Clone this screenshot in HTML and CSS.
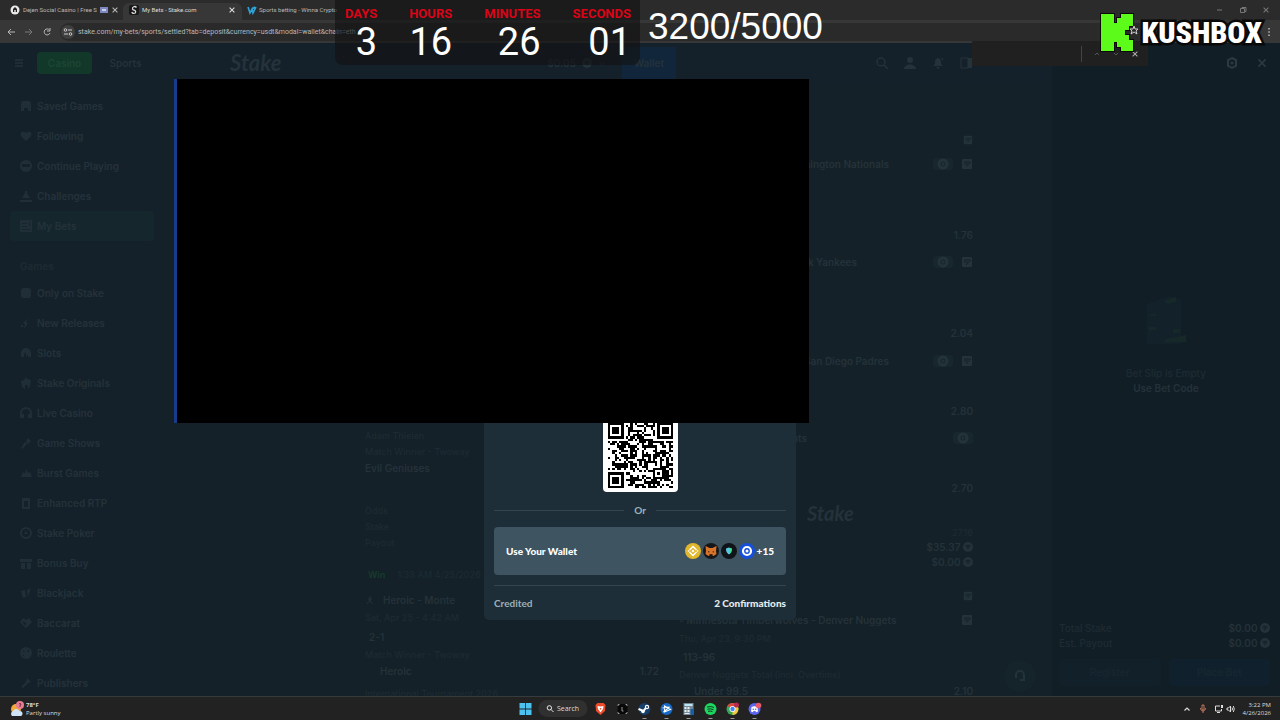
FILE: index.html
```html
<!DOCTYPE html>
<html lang="en">
<head>
<meta charset="utf-8">
<title>My Bets - Stake.com</title>
<link rel="stylesheet" href="styles.css">
</head>
<body>
<svg class="defs" aria-hidden="true">
  <symbol id="x" viewBox="0 0 10 10"><path d="M2 2l6 6M8 2l-6 6" fill="none" stroke="currentColor" stroke-width="1.3"/></symbol>
  <symbol id="coin" viewBox="0 0 12 12"><circle cx="6" cy="6" r="6" fill="currentColor"/><path d="M3 4h6M6 4v5M3 6h6" stroke="#142128"/></symbol>
  <symbol id="play" viewBox="0 0 20 12"><rect width="20" height="12" rx="3" fill="#18262e"/><circle cx="10" cy="6" r="4" fill="none" stroke="currentColor" stroke-width="3"/><path d="M9 4l3 2-3 2z" fill="currentColor"/></symbol>
  <symbol id="slip" viewBox="0 0 12 12"><rect x="1" y="1" width="10" height="10" rx="1" fill="currentColor"/><path d="M3 4h6M3 6h4M5 9l5-5" stroke="#142128"/></symbol>
</svg>

<header class="browser">
  <nav class="tabs">
    <button class="tab first"><svg class="i10" viewBox="0 0 10 10"><circle cx="5" cy="5" r="4.5" fill="#e8e8e8"/><path d="M3 7V4l2-2 2 2v3H5.700V5H4.300v2z" fill="#222"/></svg><span>Dejen Social Casino | Free S</span><svg class="i8" viewBox="0 0 8 8"><rect y="1" width="8" height="6" fill="#7d86bd"/><path d="M2 3h4v2H2z" fill="#c8cdf0"/></svg><svg class="i8"><use href="#x"/></svg></button>
    <button class="tab active"><svg class="i10" viewBox="0 0 10 10"><rect width="10" height="10" rx="2" fill="#181818"/><path d="M7.500 2.500C6 .5 3 2 3.500 4c.5 1.500 3.500 1 3.200 3C6.400 8.800 3.500 9 2.800 7" fill="none" stroke="#ddd" stroke-width="1.300"/></svg><span>My Bets - Stake.com</span><svg class="i8"><use href="#x"/></svg></button>
    <button class="tab third"><svg class="i8" viewBox="0 0 8 8"><path d="M0 1l2 6 2-4 1 4 3-6M4 3l3-2" fill="none" stroke="#2fa4d8" stroke-width="1.600"/></svg><span>Sports betting - Winna Crypto</span></button>
    <div class="wincontrols">
      <button aria-label="Minimize"><svg class="i8" viewBox="0 0 8 8"><path d="M1 4h5" stroke="currentColor"/></svg></button>
      <button aria-label="Restore"><svg class="i8" viewBox="0 0 8 8"><path d="M1.500 2.500h4v4h-4zM3 2.500v-1h4v4H5.500" fill="none" stroke="currentColor"/></svg></button>
      <button aria-label="Close"><svg class="i8"><use href="#x"/></svg></button>
    </div>
  </nav>
  <div class="toolbar">
    <button aria-label="Back"><svg class="i10" viewBox="0 0 10 10"><path d="M9 5H2M5 2L2 5l3 3" fill="none" stroke="currentColor"/></svg></button>
    <button aria-label="Forward" class="faded"><svg class="i10" viewBox="0 0 10 10"><path d="M1 5h7M5 2l3 3-3 3" fill="none" stroke="currentColor"/></svg></button>
    <button aria-label="Reload"><svg class="i10" viewBox="0 0 10 10"><path d="M7.500 3A3 3 0 1 0 8 6M8 1v3H5" fill="none" stroke="currentColor"/></svg></button>
    <label class="address"><svg class="site" viewBox="0 0 14 14"><circle cx="7" cy="7" r="7" fill="#404040"/><path d="M7 5h4M3 9h4" stroke="#ccc"/><circle cx="4.500" cy="5" r="1.300" fill="none" stroke="#ccc"/><circle cx="9.500" cy="9" r="1.300" fill="none" stroke="#ccc"/></svg><input type="text" aria-label="Address" value="stake.com/my-bets/sports/settled?tab=deposit&amp;currency=usdt&amp;modal=wallet&amp;chain=eth"></label>
    <button aria-label="Menu"><svg class="i8" viewBox="0 0 8 8"><path d="M4 0v1.500M4 3.200v1.500M4 6.500V8" stroke="currentColor" stroke-width="1.500"/></svg></button>
  </div>
</header>

<div class="app">
  <div class="left">
    <div class="lefthead"><button aria-label="Toggle menu"><svg class="i10" viewBox="0 0 10 10"><path d="M1 2h8M1 5h8M1 8h8" stroke="currentColor" stroke-width="1.500"/></svg></button><a class="casino" href="#">Casino</a><a class="sports" href="#">Sports</a></div>
    <nav class="side">
      <a href="#"><svg viewBox="0 0 12 12"><path d="M2 1h8l1 3v7H8V8H4v3H1V4z"/></svg>Saved Games</a>
      <a href="#"><svg viewBox="0 0 12 12"><path d="M6 11L1 6C-1 3 3 0 6 3c3-3 7 0 5 3z"/></svg>Following</a>
      <a href="#"><svg viewBox="0 0 12 12"><path fill-rule="evenodd" d="M6 0a6 6 0 1 1 0 12A6 6 0 0 1 6 0zM2 4v3h8V4z"/></svg>Continue Playing</a>
      <a href="#"><svg viewBox="0 0 12 12"><path d="M5 1h2v2l3 5H2l3-5zM0 10h12v2H0z"/></svg>Challenges</a>
      <a href="#" class="on"><svg viewBox="0 0 12 12"><path fill-rule="evenodd" d="M0 0h12v12H0zM2 3v1h5V3zM2 6v1h5V6zM2 9v1h8V9zM9 2v4h1V2z"/></svg>My Bets</a>
      <h2>Games</h2>
      <a href="#"><svg viewBox="0 0 12 12"><rect x="1" y="1" width="10" height="10" rx="3"/></svg>Only on Stake</a>
      <a href="#"><svg viewBox="0 0 12 12"><path d="M8 1L6 5l2 1-4 6 1-5-2-1zM1 8h2v2H1z"/></svg>New Releases</a>
      <a href="#"><svg viewBox="0 0 12 12"><path d="M1 10V6a5 5 0 0 1 10 0v4H8V7l-2 3V5L4 7v3z"/></svg>Slots</a>
      <a href="#"><svg viewBox="0 0 12 12"><path d="M6 0l1 2 4 1-1 6-2 3V8H5v4L2 10 1 4l3-1z"/></svg>Stake Originals</a>
      <a href="#"><svg viewBox="0 0 12 12"><path d="M0 11V6a6 6 0 0 1 12 0v5H8V7h2V6a4 4 0 0 0-8 0v1h2v4z"/></svg>Live Casino</a>
      <a href="#"><svg viewBox="0 0 12 12"><path d="M8 1l3 3-3 3-2-2zM5 5l2 2-5 5-1-1z"/></svg>Game Shows</a>
      <a href="#"><svg viewBox="0 0 12 12"><path d="M1 10l2-5 2 2 1-5 2 4 2-1 2 5z"/></svg>Burst Games</a>
      <a href="#"><svg viewBox="0 0 12 12"><path fill-rule="evenodd" d="M2 1h8v11H2zM4 4v6h4V4z"/></svg>Enhanced RTP</a>
      <a href="#"><svg viewBox="0 0 12 12"><path fill-rule="evenodd" d="M6 0a6 6 0 1 1 0 12A6 6 0 0 1 6 0zM6 2a4 4 0 1 0 0 8 4 4 0 0 0 0-8zM6 4l2 3H4z"/></svg>Stake Poker</a>
      <a href="#"><svg viewBox="0 0 12 12"><path d="M0 2h12v3H0zM1 6h4v6H1zM7 6h4v6H7z"/></svg>Bonus Buy</a>
      <a href="#"><svg viewBox="0 0 12 12"><path d="M1 4l4-1 1 7-3 1zM7 3l4-2-3 9z"/></svg>Blackjack</a>
      <a href="#"><svg viewBox="0 0 12 12"><path fill-rule="evenodd" d="M6 11L0 5l3-4 3 2 3-2 3 4zM3 4v2l3 3V6z"/></svg>Baccarat</a>
      <a href="#"><svg viewBox="0 0 12 12"><path fill-rule="evenodd" d="M6 0a6 6 0 1 1 0 12A6 6 0 0 1 6 0zM3 3v2h2zM7 3l2 3V3zM3 7v2l2 1z"/></svg>Roulette</a>
      <a href="#"><svg viewBox="0 0 12 12"><path d="M7 1l4 4-3 1-5 5-2-1 5-5z"/></svg>Publishers</a>
    </nav>
  </div>

  <div class="center">
    <div class="mainhead">
      <a class="brand" href="#">Stake</a>
      <div class="balance"><span>$0.05</span><svg class="i10"><use href="#coin"/></svg><svg class="i8" viewBox="0 0 8 8"><path d="M1 3l3 3 3-3" fill="none" stroke="currentColor"/></svg></div>
      <button class="wallet">Wallet</button>
      <div class="tools">
        <svg viewBox="0 0 12 12"><circle cx="5" cy="5" r="4" fill="none" stroke="currentColor" stroke-width="1.500"/><path d="M8 8l4 4" stroke="currentColor" stroke-width="1.500"/></svg>
        <svg viewBox="0 0 12 12"><circle cx="6" cy="3" r="3" fill="currentColor"/><path d="M0 12c0-6 12-6 12 0z" fill="currentColor"/></svg>
        <svg viewBox="0 0 12 12"><path d="M1 9l2-2V4c1-4 5-4 6 0v3l2 2zM4 10h4l-2 2zM9 1h2v3z" fill="currentColor"/></svg>
        <svg viewBox="0 0 12 12"><path d="M1 1h7v10H1z" fill="none" stroke="currentColor"/><path d="M8 1h4v10H8z" fill="currentColor"/></svg>
      </div>
    </div>
    <main class="bets">
      <section class="col one">
        <p class="dim">Adam Thielen</p><p class="dim">Match Winner - Twoway</p><p>Evil Geniuses</p>
        <p class="dim g27">Odds</p><p class="dim">Stake</p><p class="dim">Payout</p>
        <p class="dim g16"><b class="win">Win</b>1:38 AM 4/25/2026</p>
        <p class="g9 big"><svg class="i10" viewBox="0 0 10 10"><path d="M5 1v4L2 9M5 5l2 4M3 4h4" fill="none" stroke="currentColor"/></svg>Heroic - Monte</p>
        <p class="dim g2">Sat, Apr 25 - 4:42 AM</p>
        <p class="g3 ind">2-1</p><p class="dim g2">Match Winner - Twoway</p>
        <p class="split"><span class="chk">Heroic</span><span>1.72</span></p>
        <p class="dim g7">International Tournament 2026</p>
      </section>
      <section class="col two">
        <p class="icons"><svg class="i10"><use href="#slip"/></svg></p>
        <p class="split g8"><span class="cut">Washington Nationals</span><span class="icons"><svg class="pl"><use href="#play"/></svg><svg class="i12"><use href="#slip"/></svg></span></p>
        <p class="end g55">1.76</p>
        <p class="split g11"><span class="cut y">New York Yankees</span><span class="icons"><svg class="pl"><use href="#play"/></svg><svg class="i12"><use href="#slip"/></svg></span></p>
        <p class="end g55">2.04</p>
        <p class="split g12"><span class="cut">San Diego Padres</span><span class="icons"><svg class="pl"><use href="#play"/></svg><svg class="i12"><use href="#slip"/></svg></span></p>
        <p class="end g34">2.80</p>
        <p class="split g11"><span class="cut t">Giants</span><span class="icons"><svg class="pl"><use href="#play"/></svg></span></p>
        <p class="end g34">2.70</p>
        <p class="mark">Stake</p>
        <p class="end dim tight">27.16</p><p class="end tight">$35.37 <svg class="i10"><use href="#coin"/></svg></p><p class="end tight">$0.00 <svg class="i10"><use href="#coin"/></svg></p>
        <p class="icons g18"><svg class="i10"><use href="#slip"/></svg></p>
        <p class="split g8"><span>◦ Minnesota Timberwolves - Denver Nuggets</span><svg class="i12"><use href="#slip"/></svg></p>
        <p class="dim g3">Thu, Apr 23, 9:30 PM</p><p class="g2 ind">113-96</p><p class="dim g2">Denver Nuggets Total (incl. Overtime)</p>
        <p class="split"><span class="u">Under 99.5</span><span>2.10</span></p>
      </section>
    </main>
  </div>

  <aside class="betslip">
    <div class="sliphead"><svg viewBox="0 0 12 12"><path d="M6 1l4 2v6l-4 2-4-2V3z" fill="none" stroke="currentColor" stroke-width="2"/><circle cx="6" cy="6" r="1.500" fill="currentColor"/></svg><svg><use href="#x"/></svg></div>
    <div class="empty">
      <svg viewBox="0 0 44 52"><path d="M3 10L25 2l12 4v44H3z" fill="#13222a"/><path d="M5 21l7-2v3H5zM5 33h7v3H5zM20 7l12-4v5l-8 2zM29 35h7v4h-7zM22 45l20-4v7H20z" fill="#162928"/></svg>
      <p class="dim">Bet Slip is Empty</p><button>Use Bet Code</button>
    </div>
    <div class="totals">
      <p class="split"><span class="dim">Total Stake</span><span>$0.00 <svg class="i10"><use href="#coin"/></svg></span></p>
      <p class="split"><span class="dim">Est. Payout</span><span>$0.00 <svg class="i10"><use href="#coin"/></svg></span></p>
      <div class="slipbuttons"><button>Register</button><button class="blue">Place Bet</button></div>
    </div>
  </aside>
  <button class="help" aria-label="Support"><svg class="i12" viewBox="0 0 12 12"><path d="M2 8V5a4 4 0 0 1 8 0v5H6M2 5v3M10 5v3" fill="none" stroke="currentColor" stroke-width="2"/></svg></button>
</div>

<div class="modal" role="dialog" aria-label="Deposit">
  <div class="qrcard"><svg id="qr" viewBox="0 0 29 29" role="img" aria-label="Deposit QR code"></svg></div>
  <div class="or"><span>Or</span></div>
  <button class="usewallet"><b>Use Your Wallet</b>
    <span class="coins">
      <svg viewBox="0 0 16 16"><circle cx="8" cy="8" r="8" fill="#e3b72c"/><path d="M4.500 7L8 3.500 11.500 7M4.500 9L8 12.500 11.500 9" fill="none" stroke="#fff" stroke-width="1.500"/><path d="M8 6.500L9.500 8 8 9.500 6.500 8zM3.500 7l1 1-1 1-1-1zM12.500 7l1 1-1 1-1-1z" fill="#fff"/></svg>
      <svg viewBox="0 0 16 16"><circle cx="8" cy="8" r="8" fill="#171719"/><path d="M2.500 3L6.500 5h3l4-2-.5 5 .5 3-3 2-1.500-1h-2l-1.500 1-3-2 .5-3z" fill="#d9742b"/><path d="M5 8l2 1-2 .6zM11 8L9 9l2 .6zM6.500 11h3v1h-3z" fill="#442310"/></svg>
      <svg viewBox="0 0 16 16"><circle cx="8" cy="8" r="8" fill="#101318"/><path d="M8 4.500l3 1c0 3-.5 4.500-3 6z" fill="#39e38d"/><path d="M8 4.500l-3 1c0 3 .5 4.500 3 6z" fill="#59c7e4"/></svg>
      <svg viewBox="0 0 16 16"><circle cx="8" cy="8" r="8" fill="#164fdc"/><circle cx="8" cy="8" r="4" fill="none" stroke="#fff" stroke-width="2.200"/><circle cx="8" cy="8" r="1.500" fill="#fff"/></svg>
      <b>+15</b>
    </span>
  </button>
  <div class="credited"><span>Credited</span><b>2 Confirmations</b></div>
</div>

<form class="find"><input type="text" aria-label="Find in page"><span class="bar"></span><button type="button" aria-label="Previous"><svg class="i8" viewBox="0 0 8 8"><path d="M2 5l2-2 2 2" fill="none" stroke="currentColor"/></svg></button><button type="button" aria-label="Next"><svg class="i8" viewBox="0 0 8 8"><path d="M2 3l2 2 2-2" fill="none" stroke="currentColor"/></svg></button><button type="button" class="lit" aria-label="Close find"><svg class="i8"><use href="#x"/></svg></button></form>

<div class="blackout"></div>
<div class="timer"><div>DAYS<b>3</b></div><div>HOURS<b>16</b></div><div>MINUTES<b>26</b></div><div>SECONDS<b>01</b></div></div>
<div class="goal">3200/5000</div>
<div class="kush">
  <svg viewBox="0 0 36 42"><path d="M2 2h13v9h3V6h4V2h12v12h-4v4h-4v5h4v5h4v11H22v-4h-4v-5h-3v9H2z" fill="#5dfb19" stroke="#0a0a0a" stroke-width="2"/><path class="star" d="M35 14l1 3h3l-2 2 1 3-3-2-3 2 1-3-2-2h3z"/></svg>
  <span>KUSHBOX</span>
</div>

<footer class="taskbar">
  <div class="weather"><svg viewBox="0 0 14 16"><circle cx="6" cy="8" r="5" fill="#f2a93c"/><path d="M2 15a3 3 0 0 1 1-5c2-3 6-2 6 0 4-1 5 5 1 5z" fill="#cfe2f7"/><circle cx="10" cy="4" r="4" fill="#e77c93"/><path d="M9 3q1-1 2 0l-1 2v1" fill="none" stroke="#7c2b40"/></svg><span><b>78°F</b><br>Partly sunny</span></div>
  <div class="dock">
    <button aria-label="Start"><svg viewBox="0 0 12 12"><path d="M0 0h5.600v5.600H0zM6.400 0H12v5.600H6.400zM0 6.400h5.600V12H0zM6.400 6.400H12V12H6.400z" fill="#4cc2f1"/></svg></button>
    <button class="search"><svg viewBox="0 0 8 8"><circle cx="3.300" cy="3.300" r="2.500" fill="none" stroke="#fff"/><path d="M5 5l3 3" stroke="#fff"/></svg>Search</button>
    <button aria-label="Brave"><svg viewBox="0 0 12 12"><path d="M3 0h6l2 2-.5 6L6 12 1.500 8 1 2z" fill="#ee4b2b"/><path d="M3 3l3 .5L9 3 8.500 6 6 9.500 3.500 6z" fill="#fff"/><path d="M5 5h2L6 7z" fill="#ee4b2b"/></svg></button>
    <button aria-label="Capture"><svg viewBox="0 0 12 12"><path d="M1 1h10v10H1z" fill="#080808"/><path d="M1.500 3V1.500H3M9 1.500h1.500V3M10.500 9v1.500H9M3 10.500H1.500V9M5.500 4v4H7" fill="none" stroke="#999"/></svg></button>
    <button class="run" aria-label="Steam"><svg viewBox="0 0 12 12"><circle cx="6" cy="6" r="6" fill="#173f6b"/><path d="M0 6l5 2 3-4" fill="none" stroke="#fff" stroke-width="2"/><circle cx="8.500" cy="4" r="2.200" fill="#fff"/><circle cx="8.500" cy="4" r="1" fill="#173f6b"/><circle cx="4.500" cy="8.500" r="1.800" fill="#fff"/></svg></button>
    <button class="run" aria-label="Battle.net"><svg viewBox="0 0 12 12"><circle cx="6" cy="6" r="6" fill="#1669c7"/><path d="M4 3v6l6-2.500zM2 5l7-1M3 9l6-5" fill="none" stroke="#fff" stroke-width="1.100"/></svg></button>
    <button class="run" aria-label="Calculator"><svg viewBox="0 0 12 12"><path d="M1 0h10v12H1z" fill="#768a96"/><path d="M2 1h8v2H2z" fill="#bce7f5"/><path d="M2 4h2v2H2zM5 4h2v2H5zM2 7h2v2H2zM5 7h2v2H5zM2 10h5v1H2z" fill="#e5edf0"/><path d="M8 6h3v6H8z" fill="#175da6"/></svg></button>
    <button class="run" aria-label="Spotify"><svg viewBox="0 0 12 12"><circle cx="6" cy="6" r="6" fill="#1ed760"/><path d="M2.500 4q4-1.200 7 .5M3 6.200q3-1 6 .5M3.500 8.300q2.500-.7 4.500.4" fill="none" stroke="#12351f"/></svg></button>
    <button class="run" aria-label="Chrome"><svg viewBox="0 0 12 12"><circle cx="6" cy="6" r="6" fill="#35a853"/><path d="M6 6L.8 3A6 6 0 0 1 11.200 3z" fill="#df4639"/><path d="M6 6l5.200-3A6 6 0 0 1 6 12z" fill="#f9c53a"/><circle cx="6" cy="6" r="3" fill="#fff"/><circle cx="6" cy="6" r="2.200" fill="#4285f4"/><circle cx="10" cy="2" r="2.500" fill="#b62a50"/></svg></button>
    <button class="run" aria-label="Discord"><svg viewBox="0 0 12 12"><circle cx="6" cy="6" r="6" fill="#5c65ed"/><path d="M2.500 8.500L3 4q3-1.300 6 0l.5 4.500-2 .7L7 8H5l-.5 1.200z" fill="#fff"/><circle cx="4.800" cy="6.300" r=".8" fill="#5c65ed"/><circle cx="7.200" cy="6.300" r=".8" fill="#5c65ed"/><circle cx="10" cy="2.500" r="2.800" fill="#e65a6d"/></svg></button>
  </div>
  <div class="tray">
    <svg class="i8" viewBox="0 0 8 8"><path d="M1.500 5.500L4 3l2.500 2.500" fill="none" stroke="#ddd" stroke-width="1.200"/></svg>
    <svg class="i8 mic" viewBox="0 0 8 8"><path d="M3 0h2v5H3zM1.500 3c0 4 5 4 5 0M4 6v2" fill="none" stroke="#bd765c"/></svg>
    <svg class="i8" viewBox="0 0 8 8"><path d="M5 1H.5v5h6V4M2 7.500h3" fill="none" stroke="#ddd"/><path d="M6 0h2v3H6z" fill="#ddd"/></svg>
    <svg class="i8" viewBox="0 0 8 8"><path d="M0 3h1.500L3.500 1v6l-2-2H0zM5 2.500q1 1.500 0 3M6.300 1q2 3 0 6" fill="none" stroke="#ddd"/></svg>
    <time>3:22 PM<br>4/26/2026</time>
  </div>
</footer>
<script src="qr.js"></script>
</body>
</html>
```
FILE: styles.css
```css
* { box-sizing: border-box; }
body { margin: 0; height: 100vh; display: flex; flex-direction: column; position: relative; overflow: hidden; background: #142128; color: #24323a; font: 600 10px/16px Inter, "Open Sans", sans-serif; }
button, input { font: inherit; color: inherit; background: none; border: 0; padding: 0; margin: 0; }
button { display: flex; align-items: center; }
a { color: inherit; text-decoration: none; }
p, h2 { margin: 0; }
svg { flex: none; overflow: visible; }
.defs { position: absolute; width: 0; height: 0; }
.i8 { width: 8px; height: 8px; }
.i10 { width: 10px; height: 10px; }
.i12 { width: 12px; height: 12px; }

/* Browser window */
.browser { font: 7px/10px Roboto, "Open Sans", sans-serif; color: #b8b8b8; background: #2b2b2b; }
.tabs { height: 20px; display: flex; padding: 0 10px 0 6px; font-size: 6px; }
.tab { gap: 3px; padding: 0 4px; white-space: nowrap; }
.tab span { flex: 1; text-align: left; overflow: hidden; }
.tab.first { width: 117px; }
.tab.active { width: 119px; margin-top: 3px; padding: 0 6px 3px; border-radius: 6px 6px 0 0; background: #373737; color: #ddd; }
.tab.third { width: 104px; padding-left: 6px; }
.wincontrols { display: flex; gap: 15px; margin-left: auto; color: #777; }
.toolbar { height: 23px; display: flex; align-items: center; gap: 8px; padding: 0 7px 0 6px; background: #373737; }
.toolbar .faded { color: #777; }
.address { flex: 1; height: 18px; padding-left: 1px; display: flex; align-items: center; gap: 3px; border-radius: 9px; background: #2a2a2a; }
.address input { flex: 1; }
.site { width: 14px; height: 14px; }

/* Betting site */
.app { flex: 1; min-height: 0; display: flex; position: relative; overflow: hidden; }
.left { width: 162px; background: #14212a; }
.lefthead { height: 39px; display: flex; align-items: center; padding-left: 14px; font-size: 10px; background: #14202a; }
.casino, .sports { height: 22px; display: flex; align-items: center; justify-content: center; width: 55px; border-radius: 4px; }
.casino { margin-left: 13px; background: #113829; color: #1c4635; }
.sports { margin-left: 6px; }
.side { padding: 9px 8px 0 10px; }
.side a { height: 30px; display: flex; align-items: center; gap: 5px; padding-left: 10px; }
.side a svg { width: 12px; height: 12px; fill: #202f37; }
.side .on { background: #15262d; border-radius: 4px; }
.side h2 { padding: 13px 0 0 10px; font: inherit; line-height: 24px; color: #1d2b33; }
.center { flex: 1; min-width: 0; }
.mainhead { height: 39px; display: flex; align-items: center; padding: 0 80px 0 68px; background: #14202a; }
.brand, .mark { font: italic 700 22px/24px Lato, sans-serif; }
.balance { display: flex; align-items: center; gap: 6px; margin-left: auto; }
.wallet { height: 32px; padding: 0 12px; margin: 0 200px 0 16px; background: #11263a; }
.tools { display: flex; gap: 16px; }
.tools svg, .sliphead svg { width: 12px; height: 12px; }
.bets { display: grid; grid-template-columns: 1fr 1fr; gap: 20px; padding: 0 79px 0 203px; }
.col { min-width: 0; white-space: nowrap; }
.col p { min-height: 16px; }
.one { padding-top: 346px; }
.two { padding-top: 50px; }
.dim { color: #1d2b33; font-weight: 500; }
.one .dim, .two .dim { font-size: 9px; }
.split { display: flex; justify-content: space-between; align-items: center; }
.end { text-align: right; }
.icons { display: flex; justify-content: flex-end; align-items: center; gap: 8px; }
.pl { width: 20px; height: 12px; }
.end svg, .totals svg { vertical-align: -1px; }
.col .tight { min-height: 15px; line-height: 15px; }
.cut { width: 210px; text-align: right; }
.cut.y { width: 178px; }
.cut.t { width: 128px; }
.big { display: flex; align-items: center; gap: 8px; }
.win { color: #16392b; margin: 0 12px 0 3px; }
.ind { padding-left: 4px; }
.chk, .u { padding-left: 15px; }
.mark { padding: 5px 0 0 128px; font-size: 20px; }
.g2 { margin-top: 2px; }
.g3 { margin-top: 3px; }
.g7 { margin-top: 7px; }
.g8 { margin-top: 8px; }
.g9 { margin-top: 9px; }
.g11 { margin-top: 11px; }
.g12 { margin-top: 12px; }
.g16 { margin-top: 16px; }
.g18 { margin-top: 18px; }
.g27 { margin-top: 27px; }
.g34 { margin-top: 34px; }
.g55 { margin-top: 55px; }

.betslip { width: 228px; display: flex; flex-direction: column; background: #111e26; }
.sliphead { height: 39px; display: flex; justify-content: flex-end; align-items: center; gap: 18px; padding-right: 12px; color: #2b3941; }
.empty { display: flex; flex-direction: column; align-items: center; padding-top: 212px; line-height: 15px; }
.empty svg { width: 44px; height: 52px; margin-bottom: 20px; }
.totals { margin-top: auto; padding: 0 10px 10px 7px; line-height: 15px; }
.slipbuttons { display: flex; gap: 8px; margin-top: 8px; }
.slipbuttons button { flex: 1; height: 27px; justify-content: center; border-radius: 4px; background: #12202a; color: #172730; }
.slipbuttons .blue { background: #10212d; }
.help { position: absolute; right: 244px; bottom: 4px; width: 32px; height: 32px; justify-content: center; border-radius: 16px; background: #14242a; }

/* Deposit dialog */
.modal { position: absolute; left: 50%; bottom: 100px; transform: translateX(-50%); width: 312px; min-height: 520px; display: flex; flex-direction: column; justify-content: flex-end; padding: 0 10px 9px; border-radius: 5px; background: #1e2e38; color: #9db1b8; font: 700 10px/16px Lato, "Open Sans", sans-serif; }
.qrcard { align-self: center; padding: 6px 5px 4px; border-radius: 4px; background: #fff; }
#qr { display: block; width: 65px; height: 65px; shape-rendering: crispEdges; }
.or { display: flex; align-items: center; gap: 10px; margin: 10px 0 9px; }
.or::before, .or::after { content: ""; flex: 1; height: 1px; background: #334650; }
.usewallet { height: 48px; justify-content: space-between; padding: 0 12px; border-radius: 4px; background: #3e5561; color: #fff; }
.coins { display: flex; align-items: center; gap: 2px; }
.coins svg { width: 16px; height: 16px; }
.credited { display: flex; justify-content: space-between; margin-top: 10px; padding-top: 9px; border-top: 1px solid #334650; }
.credited b { color: #e4ebed; }

/* Find bar and stream overlays */
.find { position: absolute; right: 132px; top: 41px; width: 176px; height: 25px; display: flex; align-items: center; gap: 11px; padding-right: 9px; background: #202020; color: #555; }
.find input { flex: 1; min-width: 0; }
.bar { width: 1px; height: 16px; background: #444; }
.lit { color: #aaa; }
.blackout { position: absolute; left: 174px; top: 79px; width: 635px; height: 344px; border-left: 3px solid #183c8c; background: #000; }
.timer { position: absolute; left: 335px; top: 0; width: 305px; height: 65px; display: flex; justify-content: space-between; padding: 6px 9px 0 10px; border-radius: 0 0 8px 8px; background: rgb(18 18 20 / 65%); color: #d90416; font: 700 13px/16px Roboto, sans-serif; text-align: right; }
.timer b { display: block; color: #fff; font: 400 38px/40px Roboto, sans-serif; }
.goal { position: absolute; left: 648px; top: 6px; color: #fff; font: 37px/42px "Liberation Sans", Arial, sans-serif; }
.kush { position: absolute; right: 18px; top: 12px; display: flex; align-items: center; gap: 6px; color: #fff; font: 900 30px/42px "Roboto Condensed", "Open Sans Condensed", "DejaVu Sans Condensed", sans-serif; -webkit-text-stroke: 5px #090909; paint-order: stroke fill; }
.kush svg { width: 36px; height: 42px; }
.star { fill: none; stroke: #ccc; stroke-width: 1; }

/* Desktop taskbar */
.taskbar { height: 24px; position: relative; display: flex; align-items: center; justify-content: space-between; padding: 0 9px 0 10px; border-top: 1px solid #363b3b; background: #222; color: #ddd; font: 6px/8px "Open Sans", sans-serif; }
.weather { display: flex; align-items: center; gap: 2px; }
.weather svg { width: 14px; height: 16px; }
.dock { position: absolute; left: 50%; transform: translateX(-50%); display: flex; align-items: center; gap: 10px; }
.dock button { width: 12px; height: 20px; position: relative; }
.dock svg { width: 12px; height: 12px; }
.dock .search { width: 49px; height: 17px; margin: 0 -3px; justify-content: center; gap: 3px; border-radius: 9px; background: #303030; font-size: 7px; }
.dock .search svg { width: 7px; height: 7px; }
.run::after { content: ""; position: absolute; left: 4px; bottom: 0; width: 4px; height: 1px; background: #999; }
.tray { display: flex; align-items: center; gap: 4px; }
.tray .mic { margin: 0 4px; }
.tray time { margin-left: 4px; text-align: right; }
```
FILE: qr.js
```js
const size = 29;
const qr = document.getElementById("qr");
let seed = 74219;
const next = () => (seed = (seed * 16807) % 2147483647) / 2147483647;

function finder(x, y, cx, cy) {
  const d = Math.max(Math.abs(x - cx), Math.abs(y - cy));
  return d > 4 ? null : d !== 2 && d !== 4;
}

let d = "";
for (let y = 0; y < size; y++) {
  for (let x = 0; x < size; x++) {
    const fixed = [[3, 3], [size - 4, 3], [3, size - 4]]
      .map(([cx, cy]) => finder(x, y, cx, cy))
      .find((v) => v !== null);
    const align = Math.max(Math.abs(x - 22), Math.abs(y - 22));
    const noise = next() < 0.52;
    const dark = fixed !== undefined ? fixed : align < 3 ? align !== 1 : noise;
    if (dark) d += `M${x} ${y}h1v1h-1z`;
  }
}
const path = document.createElementNS("http://www.w3.org/2000/svg", "path");
path.setAttribute("d", d);
qr.append(path);
```
